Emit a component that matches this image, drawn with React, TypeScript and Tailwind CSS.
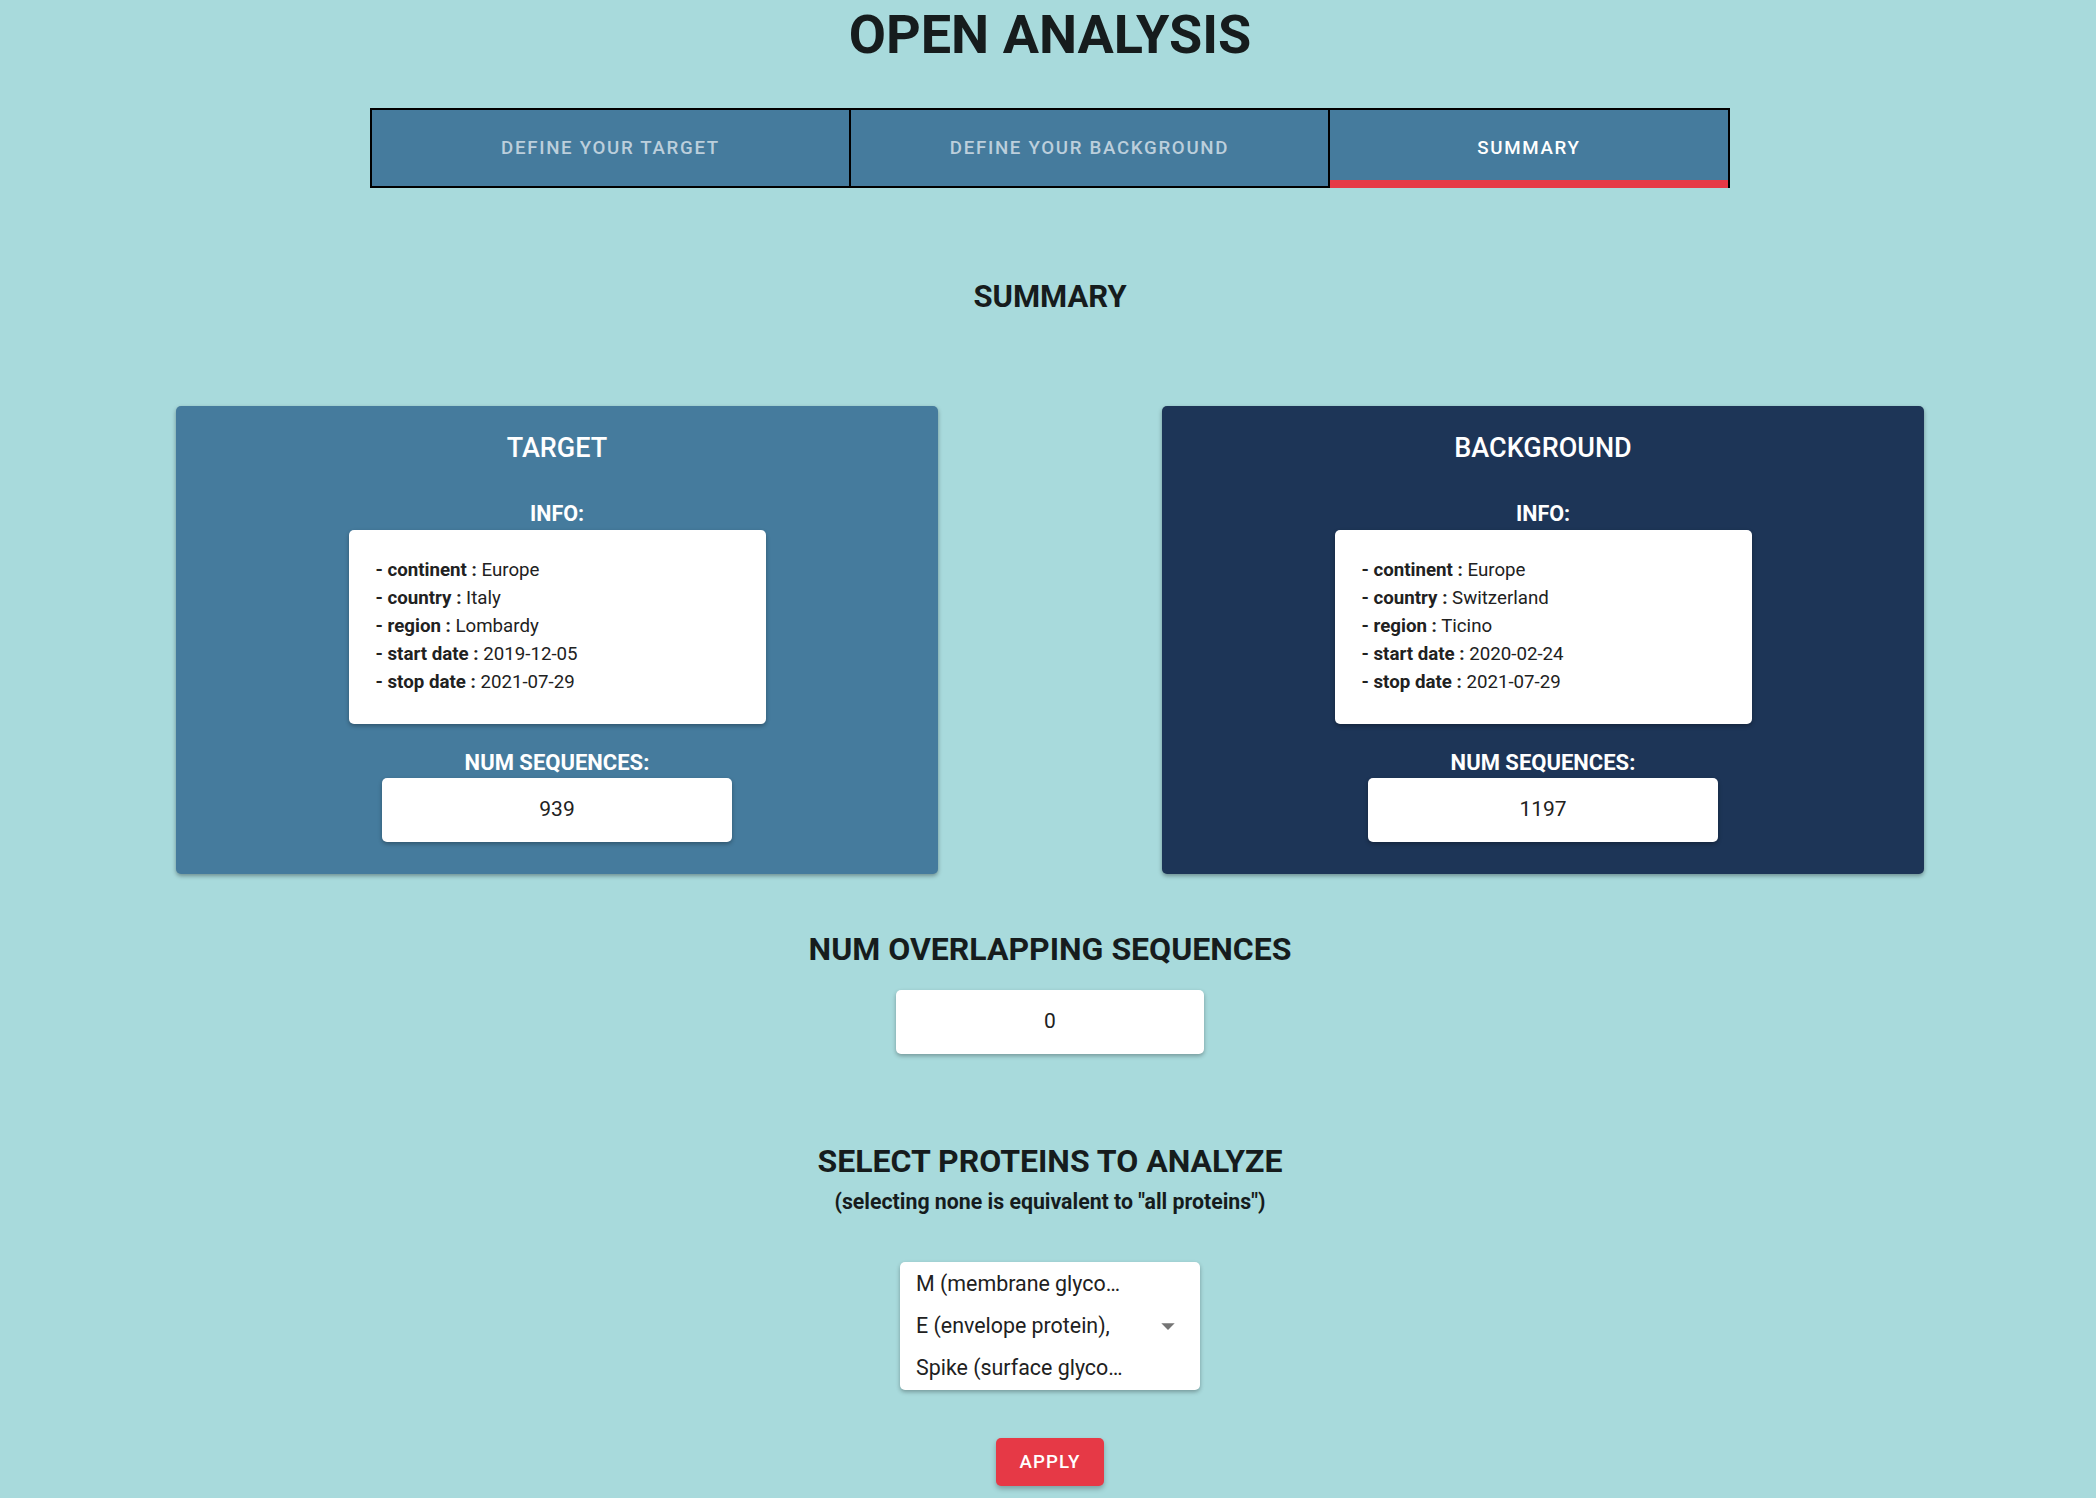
interface InfoRow {
  label: string;
  value: string;
}

interface SummaryCardProps {
  title: string;
  color: string;
  info: InfoRow[];
  count: number;
}

const target: InfoRow[] = [
  { label: 'continent', value: 'Europe' },
  { label: 'country', value: 'Italy' },
  { label: 'region', value: 'Lombardy' },
  { label: 'start date', value: '2019-12-05' },
  { label: 'stop date', value: '2021-07-29' },
];

const background: InfoRow[] = [
  { label: 'continent', value: 'Europe' },
  { label: 'country', value: 'Switzerland' },
  { label: 'region', value: 'Ticino' },
  { label: 'start date', value: '2020-02-24' },
  { label: 'stop date', value: '2021-07-29' },
];

function SummaryCard({ title, color, info, count }: SummaryCardProps) {
  return (
    <div className={`${color} w-[762px] h-[468px] rounded-[5px] shadow-[0_2px_4px_rgba(0,0,0,0.35)] flex flex-col items-center text-white`}>
      <div className="mt-[26px] h-[32px] leading-[32px] text-[27px] font-medium">{title}</div>
      <div className="mt-[38px] h-[24px] leading-[24px] text-[21.5px] font-bold">INFO:</div>
      <div className="mt-[4px] w-[417px] h-[194px] bg-white rounded-[5px] shadow-[0_2px_4px_rgba(0,0,0,0.3)] pt-[26px] px-[27px] text-[18.7px] leading-[28px] text-[#212121]">
        {info.map((row) => (
          <div key={row.label}>
            <span className="font-bold">- {row.label} :</span> {row.value}
          </div>
        ))}
      </div>
      <div className="mt-[27px] h-[24px] leading-[24px] text-[22px] font-bold">NUM SEQUENCES:</div>
      <div className="mt-[3px] w-[350px] h-[64px] bg-white rounded-[5px] shadow-[0_2px_4px_rgba(0,0,0,0.3)] flex items-center justify-center text-[21px] text-[#212121]">
        {count}
      </div>
    </div>
  );
}

export default function App() {
  return (
    <div className="min-h-screen bg-[#a8dadc] pl-[4px] font-['Roboto','Liberation_Sans',sans-serif] text-[#161c1d]">
      <div className="flex flex-col items-center">
        <h1 className="h-[69px] leading-[69px] text-[54px] font-bold">OPEN ANALYSIS</h1>

        <div className="mt-[39px] w-[1360px] flex border-x-2 border-t-2 border-black bg-[#457b9d] text-[18.7px] font-medium tracking-[0.09em]">
          <div className="w-[477px] h-[78px] border-b-2 border-black flex items-center justify-center text-[#bccfdc]">
            DEFINE YOUR TARGET
          </div>
          <div className="w-[479px] h-[78px] border-l-2 border-b-2 border-black flex items-center justify-center text-[#bccfdc]">
            DEFINE YOUR BACKGROUND
          </div>
          <div className="relative flex-1 h-[78px] border-l-2 border-black pb-[2px] flex items-center justify-center text-white">
            SUMMARY
            <div className="absolute left-0 right-0 bottom-0 h-[8px] bg-[#e63946]" />
          </div>
        </div>

        <h2 className="mt-[89px] h-[40px] leading-[40px] text-[31px] font-bold">SUMMARY</h2>

        <div className="mt-[89px] flex gap-[224px]">
          <SummaryCard title="TARGET" color="bg-[#457b9d]" info={target} count={939} />
          <SummaryCard title="BACKGROUND" color="bg-[#1d3557]" info={background} count={1197} />
        </div>

        <h2 className="mt-[55px] h-[40px] leading-[40px] text-[32px] font-bold">NUM OVERLAPPING SEQUENCES</h2>
        <div className="mt-[21px] w-[308px] h-[64px] bg-white rounded-[5px] shadow-[0_2px_4px_rgba(0,0,0,0.3)] flex items-center justify-center text-[21px] text-[#212121]">
          0
        </div>

        <h2 className="mt-[87px] h-[40px] leading-[40px] text-[32px] font-bold">SELECT PROTEINS TO ANALYZE</h2>
        <p className="mt-[7px] h-[28px] leading-[28px] text-[21.3px] font-bold">
          (selecting none is equivalent to "all proteins")
        </p>

        <div className="relative mt-[46px] w-[300px] h-[128px] bg-white rounded-[5px] shadow-[0_2px_4px_rgba(0,0,0,0.3)] py-[1px] pl-[16px] text-[21.4px] leading-[42px] text-[#212121]">
          <div className="w-[214px] truncate">M (membrane glycoprotein),</div>
          <div className="w-[214px] truncate">E (envelope protein),</div>
          <div className="w-[214px] truncate">Spike (surface glycoprotein)</div>
          <svg className="absolute right-[16px] top-1/2 -translate-y-1/2 w-[32px] h-[32px]" viewBox="0 0 24 24">
            <path d="M7 10l5 5 5-5z" fill="#757575" />
          </svg>
        </div>

        <button className="mt-[48px] w-[108px] h-[48px] rounded-[5px] bg-[#e63946] text-white text-[18.7px] font-medium tracking-[0.06em] shadow-[0_3px_5px_rgba(0,0,0,0.25)]">
          APPLY
        </button>
        <div className="h-[40px]" />
      </div>
    </div>
  );
}
